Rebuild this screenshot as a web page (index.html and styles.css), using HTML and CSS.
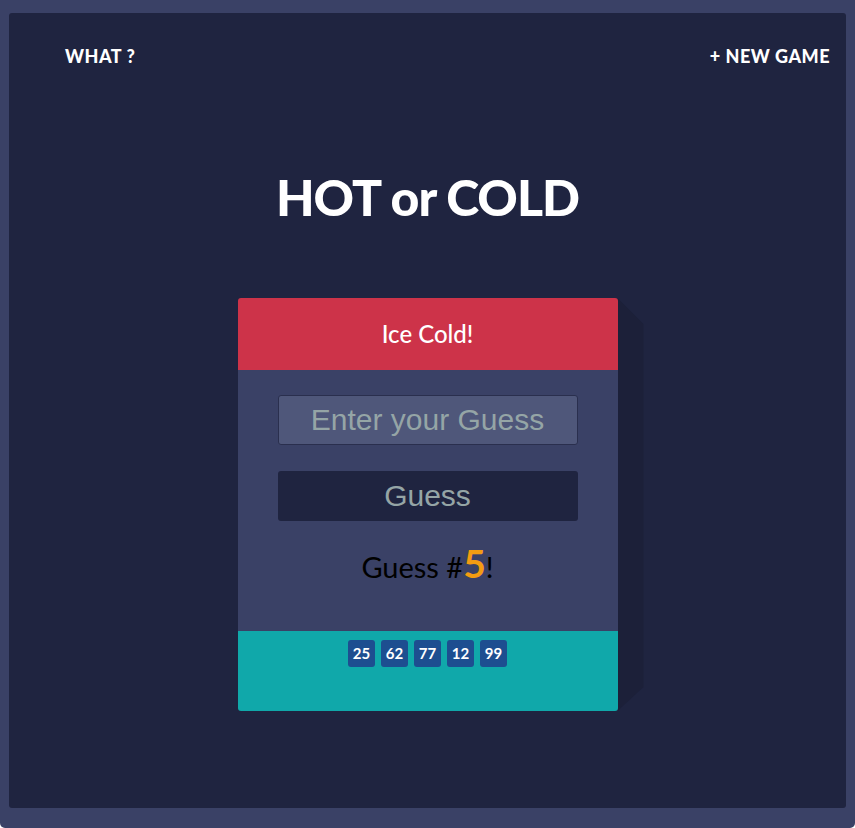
FILE: index.html
```html
<!DOCTYPE html>
<html lang="en">
<head>
<meta charset="utf-8">
<title>HOT or COLD</title>
<link rel="stylesheet" href="styles.css">
</head>
<body>
<div class="page">
  <main class="panel">
    <nav class="nav">
      <a class="nav-link" href="#">WHAT ?</a>
      <a class="nav-link" href="#">+ NEW GAME</a>
    </nav>
    <h1 class="title">HOT or COLD</h1>
    <section class="card">
      <header class="card-head">Ice Cold!</header>
      <div class="card-body">
        <input class="guess-input" type="text" placeholder="Enter your Guess">
        <button class="guess-btn" type="button">Guess</button>
        <p class="count">Guess #<span class="count-num">5</span>!</p>
      </div>
      <footer class="card-foot">
        <span class="chip">25</span>
        <span class="chip">62</span>
        <span class="chip">77</span>
        <span class="chip">12</span>
        <span class="chip">99</span>
      </footer>
    </section>
  </main>
</div>
</body>
</html>
```
FILE: styles.css
```css
* { box-sizing: border-box; }
html { background: #ffffff; }
body {
  margin: 0;
  font-family: Lato, "Open Sans", sans-serif;
}
.page {
  height: 828px;
  background: #3a4166;
  padding: 13px 9px 20px;
  border-radius: 0 0 5px 5px;
}
.panel {
  height: 795px;
  background: #1f2440;
  border-radius: 3px;
  padding-top: 32px;
}
.nav {
  display: flex;
  justify-content: space-between;
  padding: 0 16px 0 56px;
}
.nav-link {
  color: #ffffff;
  text-decoration: none;
  font-weight: 900;
  font-size: 18px;
  letter-spacing: 0.5px;
}
.title {
  margin: 100px 0 0;
  text-align: center;
  color: #ffffff;
  font-size: 50px;
  font-weight: 900;
  line-height: 60px;
  letter-spacing: -1px;
}
.card {
  position: relative;
  width: 380px;
  margin: 71px auto 0;
  border-radius: 3px;
}
.card::after {
  content: "";
  position: absolute;
  top: 0;
  left: 100%;
  width: 26px;
  height: 100%;
  background: #1c2039;
  clip-path: polygon(0 0, 100% 26px, 100% calc(100% - 24px), 0 100%);
}
.card-head {
  height: 72px;
  line-height: 72px;
  background: #cd3349;
  color: #ffffff;
  text-align: center;
  font-size: 24px;
  font-weight: 500;
  border-radius: 3px 3px 0 0;
}
.card-body {
  height: 261px;
  background: #3a4166;
  display: flex;
  flex-direction: column;
  align-items: center;
  padding-top: 25px;
}
.guess-input {
  width: 300px;
  height: 50px;
  background: #4f577a;
  border: 1px solid #2a2f4e;
  border-radius: 3px;
  text-align: center;
  font-family: "Liberation Sans", Arial, sans-serif;
  font-size: 30px;
  color: #95a5a6;
  outline: none;
  padding: 0;
}
.guess-input::placeholder { color: #95a5a6; opacity: 1; }
.guess-btn {
  margin-top: 26px;
  width: 300px;
  height: 50px;
  background: #1f2440;
  border: none;
  border-radius: 3px;
  font-family: "Liberation Sans", Arial, sans-serif;
  font-size: 30px;
  color: #95a5a6;
  padding: 0;
}
.count {
  margin: 23px 0 0;
  font-size: 29px;
  line-height: 40px;
  color: #000000;
}
.count-num {
  color: #f39c12;
  font-weight: 700;
  font-size: 39px;
  line-height: 1;
}
.card-foot {
  height: 80px;
  background: #10a8aa;
  border-radius: 0 0 3px 3px;
  display: flex;
  justify-content: center;
  align-items: flex-start;
  gap: 6px;
  padding-top: 9px;
}
.chip {
  width: 27px;
  height: 27px;
  line-height: 27px;
  text-align: center;
  background: #1d4e90;
  color: #ffffff;
  font-weight: 700;
  font-size: 15px;
  border-radius: 3px;
}
```
